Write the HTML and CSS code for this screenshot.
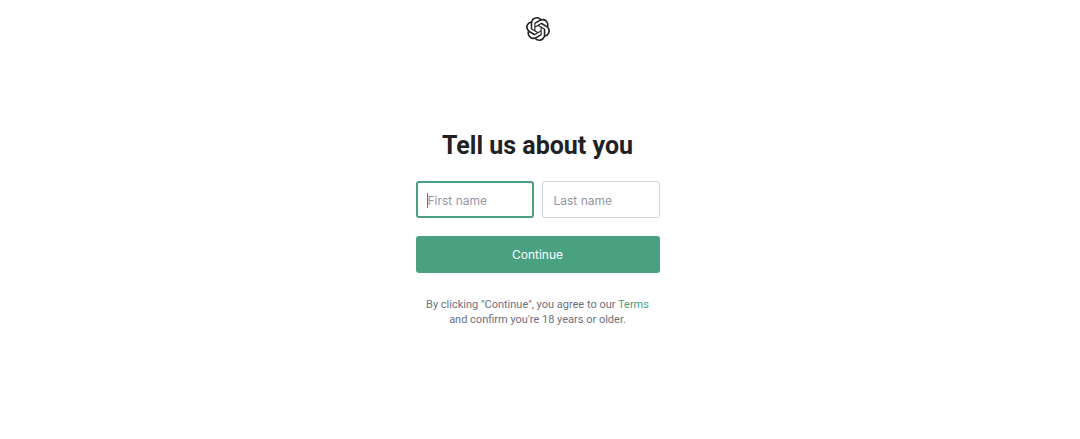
FILE: index.html
```html
<!DOCTYPE html>
<html lang="en">
<head>
<meta charset="utf-8">
<meta name="viewport" content="width=device-width, initial-scale=1">
<title>Tell us about you</title>
<link rel="stylesheet" href="styles.css">
</head>
<body>
<header class="header">
<svg class="logo" viewBox="0 0 24 24" role="img" aria-label="OpenAI"><path d="M22.2819 9.8211a5.9847 5.9847 0 0 0-.5157-4.9108 6.0462 6.0462 0 0 0-6.5098-2.9A6.0651 6.0651 0 0 0 4.9807 4.1818a5.9847 5.9847 0 0 0-3.9977 2.9 6.0462 6.0462 0 0 0 .7427 7.0966 5.98 5.98 0 0 0 .511 4.9107 6.051 6.051 0 0 0 6.5146 2.9001A5.9847 5.9847 0 0 0 13.2599 24a6.0557 6.0557 0 0 0 5.7718-4.2058 5.9894 5.9894 0 0 0 3.9977-2.9001 6.0557 6.0557 0 0 0-.7475-7.0729zm-9.022 12.6081a4.4755 4.4755 0 0 1-2.8764-1.0408l.1419-.0804 4.7783-2.7582a.7948.7948 0 0 0 .3927-.6813v-6.7369l2.02 1.1686a.071.071 0 0 1 .038.052v5.5826a4.504 4.504 0 0 1-4.4945 4.4944zm-9.6607-4.1254a4.4708 4.4708 0 0 1-.5346-3.0137l.142.0852 4.783 2.7582a.7712.7712 0 0 0 .7806 0l5.8428-3.3685v2.3324a.0804.0804 0 0 1-.0332.0615L9.74 19.9502a4.4992 4.4992 0 0 1-6.1408-1.6464zM2.3408 7.8956a4.485 4.485 0 0 1 2.3655-1.9728V11.6a.7664.7664 0 0 0 .3879.6765l5.8144 3.3543-2.0201 1.1685a.0757.0757 0 0 1-.071 0l-4.8303-2.7865A4.504 4.504 0 0 1 2.3408 7.872zm16.5963 3.8558L13.1038 8.364 15.1192 7.2a.0757.0757 0 0 1 .071 0l4.8303 2.7913a4.4944 4.4944 0 0 1-.6765 8.1042v-5.6772a.79.79 0 0 0-.407-.667zm2.0107-3.0231l-.142-.0852-4.7735-2.7818a.7759.7759 0 0 0-.7854 0L9.409 9.2297V6.8974a.0662.0662 0 0 1 .0284-.0615l4.8303-2.7866a4.4992 4.4992 0 0 1 6.6802 4.66zM8.3065 12.863l-2.02-1.1638a.0804.0804 0 0 1-.038-.0567V6.0742a4.4992 4.4992 0 0 1 7.3757-3.4537l-.142.0805L8.704 5.459a.7948.7948 0 0 0-.3927.6813zm1.0976-2.3654l2.602-1.4998 2.6069 1.4998v2.9994l-2.5974 1.4997-2.6067-1.4997Z"/></svg>
</header>
<main class="main">
<h1 class="title">Tell us about you</h1>
<form class="form">
<div class="names">
<div class="cell">
<input class="field" type="text" aria-label="First name" placeholder="First name" autofocus>
<span class="caret" aria-hidden="true"></span>
</div>
<div class="cell">
<input class="field" type="text" aria-label="Last name" placeholder="Last name">
</div>
</div>
<button class="continue" type="submit">Continue</button>
</form>
<p class="legal">By clicking "Continue", you agree to our <a class="link" href="#terms">Terms</a><br>and confirm you're 18 years or older.</p>
</main>
</body>
</html>
```

FILE: styles.css
```css
* { box-sizing: border-box; }
body {
  margin: 0;
  padding-right: 5px;
  background: #fff;
  color: #202123;
  font-family: Inter, "Liberation Sans", sans-serif;
}
.header { display: flex; justify-content: center; padding-top: 17px; }
.logo { width: 24px; height: 24px; fill: #202123; }
.main { width: 100%; max-width: 244px; margin: 88px auto 0; }
.title {
  margin: 0 0 18px;
  font-family: Roboto, Inter, sans-serif;
  font-size: 25px;
  line-height: 34px;
  font-weight: 700;
  text-align: center;
  white-space: nowrap;
}
.form { display: grid; gap: 18px; }
.names { display: grid; grid-template-columns: 1fr 1fr; gap: 8px; }
.cell { position: relative; display: flex; }
.field {
  width: 100%;
  min-width: 0;
  height: 37px;
  padding: 1px 11px 0;
  border: 1px solid #d2d3dc;
  border-radius: 3px;
  background: #fff;
  color: #202123;
  caret-color: transparent;
  font: 12px/18px Inter, "Liberation Sans", sans-serif;
  outline: none;
}
.field::placeholder { color: #9596a5; opacity: 1; }
.field:focus { border: 2px solid #4aa181; padding: 1px 10px 0; }
.caret {
  position: absolute;
  left: 11px;
  top: 12px;
  width: 1px;
  height: 15px;
  background: #6e6f80;
  pointer-events: none;
  visibility: hidden;
}
.field:focus:placeholder-shown + .caret { visibility: visible; }
.continue {
  height: 37px;
  border: 0;
  border-radius: 3px;
  background: #4aa181;
  color: #fff;
  font: 12px/18px Inter, "Liberation Sans", sans-serif;
}
.legal {
  margin: 24px 0 0;
  color: #6e6f80;
  font-family: Roboto, Inter, sans-serif;
  font-size: 11px;
  line-height: 15px;
  text-align: center;
  white-space: nowrap;
}
.link { color: #4aa181; text-decoration: none; }
```
